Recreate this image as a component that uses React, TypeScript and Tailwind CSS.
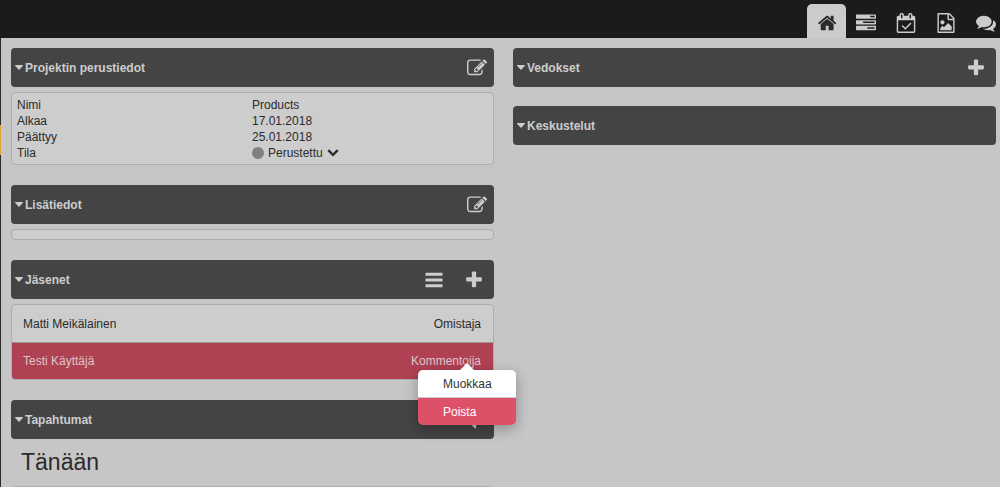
import type { ReactNode } from "react";
import clsx from "clsx";

const ICONS = {
  home: "M1408 992v480q0 26-19 45t-45 19h-384v-384h-256v384h-384q-26 0-45-19t-19-45v-480q0-1 .5-3t.5-3l575-474 575 474q1 2 1 6zm223-69l-62 74q-8 9-21 11h-3q-13 0-21-7l-692-577-692 577q-12 8-24 7-13-2-21-11l-62-74q-8-10-7-23.5t11-21.5l719-599q32-26 76-26t76 26l244 204v-195q0-14 9-23t23-9h192q14 0 23 9t9 23v408l219 182q10 8 11 21.5t-7 23.5z",
  tasks:
    "M1024 1408h640v-128h-640v128zm-384-512h1024v-128h-1024v128zm640-512h384v-128h-384v128zm512 832v256q0 26-19 45t-45 19h-1664q-26 0-45-19t-19-45v-256q0-26 19-45t45-19h1664q26 0 45 19t19 45zm0-512v256q0 26-19 45t-45 19h-1664q-26 0-45-19t-19-45v-256q0-26 19-45t45-19h1664q26 0 45 19t19 45zm0-512v256q0 26-19 45t-45 19h-1664q-26 0-45-19t-19-45v-256q0-26 19-45t45-19h1664q26 0 45 19t19 45z",
  calendar:
    "M1303 964l-512 512q-10 9-23 9t-23-9l-288-288q-9-10-9-23t9-22l46-46q9-9 22-9t23 9l220 220 444-444q10-9 23-9t22 9l46 46q9 9 9 22t-9 23zm-1175 700h1408v-1024h-1408v1024zm384-1216v-288q0-14-9-23t-23-9h-64q-14 0-23 9t-9 23v288q0 14 9 23t23 9h64q14 0 23-9t9-23zm768 0v-288q0-14-9-23t-23-9h-64q-14 0-23 9t-9 23v288q0 14 9 23t23 9h64q14 0 23-9t9-23zm384-64v1280q0 52-38 90t-90 38h-1408q-52 0-90-38t-38-90v-1280q0-52 38-90t90-38h128v-96q0-66 47-113t113-47h64q66 0 113 47t47 113v96h384v-96q0-66 47-113t113-47h64q66 0 113 47t47 113v96h128q52 0 90 38t38 90z",
  image:
    "M1596 380q28 28 48 76t20 88v1152q0 40-28 68t-68 28h-1344q-40 0-68-28t-28-68v-1600q0-40 28-68t68-28h896q40 0 88 20t76 48zm-444-244v376h376q-10-29-22-41l-313-313q-12-12-41-22zm384 1528v-1024h-416q-40 0-68-28t-28-68v-416h-768v1536h1280zm-128-448v320h-1024v-192l192-192 128 128 384-384zm-832-192q-80 0-136-56t-56-136 56-136 136-56 136 56 56 136-56 136-136 56z",
  comments:
    "M1408 768q0 139-94 257t-256.5 186.5-353.5 68.5q-86 0-176-16-124 88-278 128-36 9-86 16h-3q-11 0-20.5-8t-11.5-21q-1-3-1-6.5t.5-6.5 2-6l2.5-5 3.5-5.5 4-5 4.5-5 4-4.5q5-6 23-25t26-29.5 22.5-29 25-38.5 20.5-44q-124-72-195-177t-71-224q0-139 94-257t256.5-186.5 353.5-68.5 353.5 68.5 256.5 186.5 94 257zm384 256q0 120-71 224.5t-195 176.5q10 24 20.5 44t25 38.5 22.5 29 26 29.5 23 25q1 1 4 4.5t4.5 5 4 5 3.5 5.5l2.5 5 2 6 .5 6.5-1 6.5q-3 14-13 22t-22 7q-50-7-86-16-154-40-278-128-90 16-176 16-271 0-472-132 58 4 88 4 161 0 309-45t264-129q125-92 192-212t67-254q0-77-23-152 129 71 204 178t75 230z",
  edit: "M888 1184l116-116-152-152-116 116v56h96v96h56zm440-720q-16-16-33 1l-350 350q-17 17-1 33t33-1l350-350q17-17 1-33zm80 594v190q0 119-84.5 203.5t-203.5 84.5h-832q-119 0-203.5-84.5t-84.5-203.5v-832q0-119 84.5-203.5t203.5-84.5h832q63 0 117 25 15 7 18 23 3 17-9 29l-49 49q-14 14-32 8-23-6-45-6h-832q-66 0-113 47t-47 113v832q0 66 47 113t113 47h832q66 0 113-47t47-113v-126q0-13 9-22l64-64q15-15 35-7t20 29zm-96-738l288 288-672 672h-288v-288zm444 132l-92 92-288-288 92-92q28-28 68-28t68 28l152 152q28 28 28 68t-28 68z",
  plus: "M1600 736v192q0 40-28 68t-68 28h-416v416q0 40-28 68t-68 28h-192q-40 0-68-28t-28-68v-416h-416q-40 0-68-28t-28-68v-192q0-40 28-68t68-28h416v-416q0-40 28-68t68-28h192q40 0 68 28t28 68v416h416q40 0 68 28t28 68z",
  bars: "M1664 1344v128q0 26-19 45t-45 19h-1408q-26 0-45-19t-19-45v-128q0-26 19-45t45-19h1408q26 0 45 19t19 45zm0-512v128q0 26-19 45t-45 19h-1408q-26 0-45-19t-19-45v-128q0-26 19-45t45-19h1408q26 0 45 19t19 45zm0-512v128q0 26-19 45t-45 19h-1408q-26 0-45-19t-19-45v-128q0-26 19-45t45-19h1408q26 0 45 19t19 45z",
  filter:
    "M1595 295q17 41-14 70l-493 493v742q0 42-39 59-13 5-25 5-27 0-45-19l-256-256q-19-19-19-45v-486l-493-493q-31-29-14-70 17-39 59-39h1280q42 0 59 39z",
  chevron:
    "M1683 808l-742 741q-19 19-45 19t-45-19l-742-741q-19-19-19-45.5t19-45.5l166-165q19-19 45-19t45 19l531 531 531-531q19-19 45-19t45 19l166 165q19 19 19 45.5t-19 45.5z",
};

type IconName = keyof typeof ICONS;

// icons that don't fill the 1792 grid evenly get a shifted view box to stay centred
const VIEW_BOX: Partial<Record<IconName, string>> = {
  home: "-78 0 1792 1792",
  calendar: "-64 0 1792 1792",
  chevron: "0 164 1792 1792",
};

function Icon({ name, className }: { name: IconName; className?: string }) {
  return (
    <svg
      viewBox={VIEW_BOX[name] ?? "0 0 1792 1792"}
      fill="currentColor"
      aria-hidden="true"
      className={clsx("shrink-0 overflow-visible", className ?? "size-5")}
    >
      <path d={ICONS[name]} />
    </svg>
  );
}

const tabs: { icon: IconName; label: string }[] = [
  { icon: "home", label: "Etusivu" },
  { icon: "tasks", label: "Tehtävät" },
  { icon: "calendar", label: "Kalenteri" },
  { icon: "image", label: "Vedokset" },
  { icon: "comments", label: "Keskustelut" },
];

function TopBar() {
  return (
    <header className="overflow-hidden bg-[#1b1b1b] pt-1">
      <nav className="-mr-1.5 flex justify-end gap-px">
        {tabs.map((tab, i) => (
          <a
            key={tab.icon}
            href={`#${tab.icon}`}
            aria-label={tab.label}
            className={clsx(
              "flex h-[34px] w-[39px] items-center justify-center rounded-t-[5px] pt-1",
              i === 0 ? "bg-[#cbcbcb] text-[#2b2b2b]" : "pr-px text-[#cbcbcb]",
            )}
          >
            <Icon name={tab.icon} />
          </a>
        ))}
      </nav>
    </header>
  );
}

type PanelProps = {
  title: string;
  actions?: { icon: IconName; label: string }[];
  wide?: boolean;
  children?: ReactNode;
};

function Panel({ title, actions = [], wide, children }: PanelProps) {
  return (
    <section>
      <div
        className={clsx(
          "flex h-[39px] items-center justify-between rounded-[4px] bg-[#444] pl-1 text-[#cdcdcd]",
          wide ? "pr-[7px]" : "pr-[10px]",
        )}
      >
        <h2>
          <button type="button" className="flex items-center gap-[2px] font-bold">
            <svg viewBox="0 0 8 5" fill="currentColor" className="h-[5px] w-2" aria-hidden="true">
              <path d="M.5 0h7q.8 0 .4.7L4.5 4.6q-.5.5-1 0L.1.7Q-.3 0 .5 0z" />
            </svg>
            {title}
          </button>
        </h2>
        <div className="flex gap-5">
          {actions.map((action) => (
            <button key={action.icon} type="button" aria-label={action.label}>
              <Icon name={action.icon} />
            </button>
          ))}
        </div>
      </div>
      {children}
    </section>
  );
}

const box = "mt-[5px] rounded-[4px] border border-[#adadad] bg-[#cdcdcd]";

function MemberMenu() {
  return (
    <div className="absolute -right-[35px] top-[27px] z-10 w-[98px] rounded-[5px] text-[#333] shadow-[0_4px_14px_rgba(0,0,0,0.3)]">
      <div className="absolute -top-[7px] left-[42px] h-[7px] w-[14px] bg-white [clip-path:polygon(50%_0,100%_100%,0_100%)]" />
      <button
        type="button"
        className="block h-7 w-full rounded-t-[5px] border-b border-[#ccc] bg-white pl-[25px] text-left"
      >
        Muokkaa
      </button>
      <button
        type="button"
        className="block h-[27px] w-full rounded-b-[5px] bg-[#de5068] pl-[25px] text-left text-white"
      >
        Poista
      </button>
    </div>
  );
}

export default function App() {
  return (
    <div className="flex h-screen flex-col bg-[#c6c6c6] font-['Liberation_Sans',Arial,sans-serif] text-[12px] leading-4 text-[#2b2b2b]">
      <TopBar />
      <div className="flex min-h-0 flex-1">
        <div className="w-px bg-[#2b2b2b] pt-[87px]">
          <div className="h-[30px] bg-[#dba939]" />
        </div>
        <main className="grid flex-1 grid-cols-2 gap-[19px] overflow-hidden pl-[10px] pr-1 pt-[10px]">
          <div className="flex flex-col gap-5">
            <Panel title="Projektin perustiedot" wide actions={[{ icon: "edit", label: "Muokkaa perustietoja" }]}>
              <dl className={clsx(box, "grid grid-cols-[235px_1fr] px-[5px] pb-[3px] pt-1")}>
                <dt>Nimi</dt>
                <dd>Products</dd>
                <dt>Alkaa</dt>
                <dd>17.01.2018</dd>
                <dt>Päättyy</dt>
                <dd>25.01.2018</dd>
                <dt>Tila</dt>
                <dd>
                  <button type="button" className="flex items-center gap-1">
                    <span className="size-3 rounded-full bg-[#808080]" />
                    Perustettu
                    <Icon name="chevron" className="size-3" />
                  </button>
                </dd>
              </dl>
            </Panel>

            <Panel title="Lisätiedot" wide actions={[{ icon: "edit", label: "Muokkaa lisätietoja" }]}>
              <div className={clsx(box, "h-[11px]")} />
            </Panel>

            <Panel
              title="Jäsenet"
              actions={[
                { icon: "bars", label: "Jäsenluettelo" },
                { icon: "plus", label: "Lisää jäsen" },
              ]}
            >
              <ul className={box}>
                <li className="flex h-[38px] items-center justify-between border-b border-[#999] pl-[11px] pr-3">
                  <span>Matti Meikälainen</span>
                  <span>Omistaja</span>
                </li>
                <li className="relative flex h-9 items-center justify-between rounded-b-[3px] bg-[#b04153] pl-[11px] pr-3 text-[#dcc6ca]">
                  <span>Testi Käyttäjä</span>
                  <span>Kommentoija</span>
                  <div className="absolute right-3 top-0">
                    <MemberMenu />
                  </div>
                </li>
              </ul>
            </Panel>

            <Panel title="Tapahtumat" actions={[{ icon: "filter", label: "Suodata" }]}>
              <h3 className="h-[42px] px-[10px] pt-2 text-[23px] leading-[30px]">Tänään</h3>
              <div className={clsx(box, "h-[38px]")} />
            </Panel>
          </div>

          <div className="flex flex-col gap-[19px]">
            <Panel title="Vedokset" actions={[{ icon: "plus", label: "Lisää vedos" }]} />
            <Panel title="Keskustelut" />
          </div>
        </main>
      </div>
    </div>
  );
}
